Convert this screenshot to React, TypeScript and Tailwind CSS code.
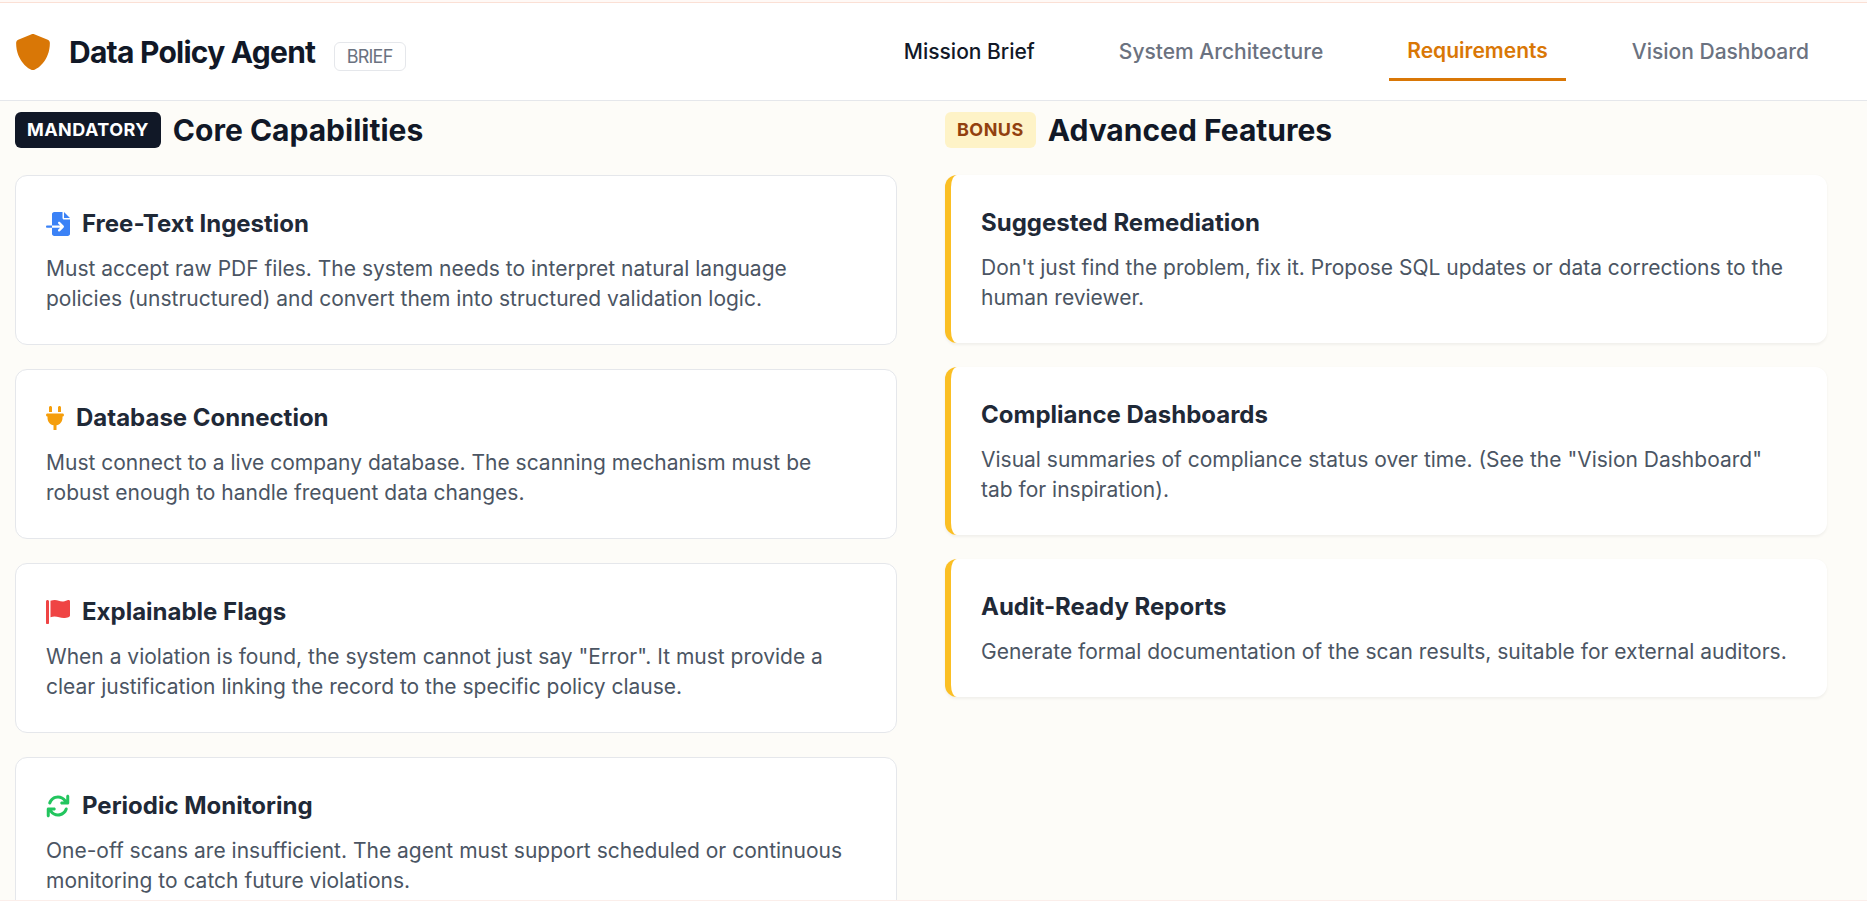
type Icon = {
  width: number
  path: string
}

type Requirement = {
  title: string
  text: string
  icon: Icon
  iconClass: string
}

const icons = {
  shield: {
    width: 512,
    path: 'M496 127.1C496 381.3 309.1 512 255.1 512C204.9 512 16 385.3 16 127.1c0-19.41 11.7-36.89 29.61-44.37l191.1-80.01c4.906-2.031 13.12-3.701 18.44-3.701c5.281 0 13.58 1.67 18.46 3.701l192 80.01C484.3 90.22 496 107.7 496 127.1z'
  },
  fileImport: {
    width: 512,
    path: 'M384 0v128h128L384 0zM352 128L352 0H176C149.5 0 128 21.49 128 48V288h174.1l-39.03-39.03c-9.375-9.375-9.375-24.56 0-33.94s24.56-9.375 33.94 0l80 80c9.375 9.375 9.375 24.56 0 33.94l-80 80c-9.375 9.375-24.56 9.375-33.94 0C258.3 404.3 256 398.2 256 392s2.344-12.28 7.031-16.97L302.1 336H128v128C128 490.5 149.5 512 176 512h288c26.51 0 48-21.49 48-48V160h-127.1C366.3 160 352 145.7 352 128zM24 288C10.75 288 0 298.7 0 312c0 13.25 10.75 24 24 24H128V288H24z'
  },
  plug: {
    width: 384,
    path: 'M96 0C78.33 0 64 14.33 64 32v96h64V32C128 14.33 113.7 0 96 0zM288 0c-17.67 0-32 14.33-32 32v96h64V32C320 14.33 305.7 0 288 0zM352 160H32C14.33 160 0 174.3 0 192s14.33 32 32 32v32c0 77.41 54.97 141.1 128 156.8V512h64v-99.2c73.03-14.83 128-79.37 128-156.8V224c17.67 0 32-14.33 32-32S369.7 160 352 160z'
  },
  flag: {
    width: 512,
    path: 'M64 496C64 504.8 56.75 512 48 512h-32C7.25 512 0 504.8 0 496V32c0-17.75 14.25-32 32-32s32 14.25 32 32V496zM476.3 0c-6.365 0-13.01 1.35-19.34 4.233c-45.69 20.86-79.56 27.94-107.8 27.94c-59.96 0-94.81-31.86-163.9-31.87C160.9 .3055 131.6 4.867 96 15.75v350.5c32-9.984 59.87-14.1 84.85-14.1c73.63 0 124.9 31.78 198.6 31.78c31.91 0 68.02-5.971 111.1-23.09C504.1 355.9 512 344.4 512 332.1V30.73C512 11.1 495.3 0 476.3 0z'
  },
  rotate: {
    width: 512,
    path: 'M464 16c-17.67 0-32 14.31-32 32v74.09C392.1 66.52 327.4 32 256 32C161.5 32 78.59 92.45 49.58 182.2c-5.438 16.81 3.797 34.88 20.61 40.28c16.89 5.5 34.88-3.812 40.3-20.59C130.9 138.5 189.4 96 256 96c50.5 0 96.26 24.55 124.4 64H336c-17.67 0-32 14.31-32 32s14.33 32 32 32h128c17.67 0 32-14.31 32-32V48C496 30.31 481.7 16 464 16zM441.8 289.6c-16.92-5.438-34.88 3.812-40.3 20.59C381.1 373.5 322.6 416 256 416c-50.5 0-96.25-24.55-124.4-64H176c17.67 0 32-14.31 32-32s-14.33-32-32-32h-128c-17.67 0-32 14.31-32 32v144c0 17.69 14.33 32 32 32s32-14.31 32-32v-74.09C119.9 445.5 184.6 480 255.1 480c94.45 0 177.4-60.45 206.4-150.2C467.9 313 458.6 294.1 441.8 289.6z'
  }
}

const tabs = ['Mission Brief', 'System Architecture', 'Requirements', 'Vision Dashboard']

const mandatory: Requirement[] = [
  {
    title: 'Free-Text Ingestion',
    text: 'Must accept raw PDF files. The system needs to interpret natural language policies (unstructured) and convert them into structured validation logic.',
    icon: icons.fileImport,
    iconClass: 'w-6 text-[#3b82f6]'
  },
  {
    title: 'Database Connection',
    text: 'Must connect to a live company database. The scanning mechanism must be robust enough to handle frequent data changes.',
    icon: icons.plug,
    iconClass: 'w-[18px] text-[#f59e0b]'
  },
  {
    title: 'Explainable Flags',
    text: 'When a violation is found, the system cannot just say "Error". It must provide a clear justification linking the record to the specific policy clause.',
    icon: icons.flag,
    iconClass: 'w-6 text-[#ef4444]'
  },
  {
    title: 'Periodic Monitoring',
    text: 'One-off scans are insufficient. The agent must support scheduled or continuous monitoring to catch future violations.',
    icon: icons.rotate,
    iconClass: 'w-6 text-[#22c55e]'
  }
]

const bonus = [
  {
    title: 'Suggested Remediation',
    text: "Don't just find the problem, fix it. Propose SQL updates or data corrections to the human reviewer."
  },
  {
    title: 'Compliance Dashboards',
    text: 'Visual summaries of compliance status over time. (See the "Vision Dashboard" tab for inspiration).'
  },
  {
    title: 'Audit-Ready Reports',
    text: 'Generate formal documentation of the scan results, suitable for external auditors.'
  }
]

function SolidIcon({ icon, className }: { icon: Icon; className: string }) {
  return (
    <svg viewBox={`0 0 ${icon.width} 512`} fill="currentColor" className={className} aria-hidden="true">
      <path d={icon.path} />
    </svg>
  )
}

function tabClass(tab: string) {
  if (tab === 'Requirements') return 'border-b-3 border-[#d97706] font-semibold text-[#d97706]'
  if (tab === 'Mission Brief') return 'font-medium text-[#111827]'
  return 'font-medium text-[#6b7280]'
}

export default function App() {
  return (
    <div className="flex h-screen flex-col overflow-hidden border-b border-[#fbeeea] bg-[#fdfcf8] font-['Inter',sans-serif] text-[#1f2937]">
      <div className="h-[3px] shrink-0 border-b border-[#fbe0d5] bg-[#fff9f6]" />

      <header className="flex h-[98px] shrink-0 items-center justify-between border-b border-[#e5e7eb] bg-white pr-10 pl-[15px]">
        <div className="flex items-center gap-[18px]">
          <SolidIcon icon={icons.shield} className="size-9 text-[#d97706]" />
          <h1 className="text-3xl leading-[42px] font-bold tracking-[-0.75px] text-[#111827]">
            Data Policy Agent{' '}
            <span className="ml-3 rounded-md border border-[#e5e7eb] px-3 py-[3px] text-lg font-normal text-[#6b7280]">
              BRIEF
            </span>
          </h1>
        </div>
        <nav className="flex items-center gap-12 pt-px">
          {tabs.map((tab) => (
            <button key={tab} className={`px-[18px] py-3 text-[21px] leading-[30px] ${tabClass(tab)}`}>
              {tab}
            </button>
          ))}
        </nav>
      </header>

      <main className="grid grid-cols-2 items-start gap-12 pt-2 pr-10 pl-[15px]">
        <section>
          <h2 className="mb-6 flex items-center text-3xl leading-[42px] font-bold text-[#111827]">
            <span className="mr-3 rounded-md bg-[#111827] px-3 py-1.5 text-lg leading-6 tracking-wide text-white">
              MANDATORY
            </span>
            Core Capabilities
          </h2>
          <div className="space-y-6">
            {mandatory.map((item) => (
              <div key={item.title} className="rounded-xl border border-[#e5e7eb] bg-white p-[30px]">
                <h3 className="mb-3 flex items-center text-2xl leading-9 font-bold">
                  <SolidIcon icon={item.icon} className={`mr-3 h-6 shrink-0 ${item.iconClass}`} />
                  {item.title}
                </h3>
                <p className="text-[21px] leading-[30px] text-[#4b5563]">{item.text}</p>
              </div>
            ))}
          </div>
        </section>

        <section>
          <h2 className="mb-6 flex items-center text-3xl leading-[42px] font-bold text-[#111827]">
            <span className="mr-3 rounded-md bg-[#fef3c7] px-3 py-1.5 text-lg leading-6 tracking-wide text-[#92400e]">
              BONUS
            </span>
            Advanced Features
          </h2>
          <div className="space-y-6">
            {bonus.map((item) => (
              <div
                key={item.title}
                className="rounded-xl border-l-6 border-[#fbbf24] bg-white p-[30px] shadow-[0_1.5px_3px_rgba(0,0,0,0.05)]"
              >
                <h3 className="mb-3 text-2xl leading-9 font-bold">{item.title}</h3>
                <p className="text-[21px] leading-[30px] text-[#4b5563]">{item.text}</p>
              </div>
            ))}
          </div>
        </section>
      </main>
    </div>
  )
}
